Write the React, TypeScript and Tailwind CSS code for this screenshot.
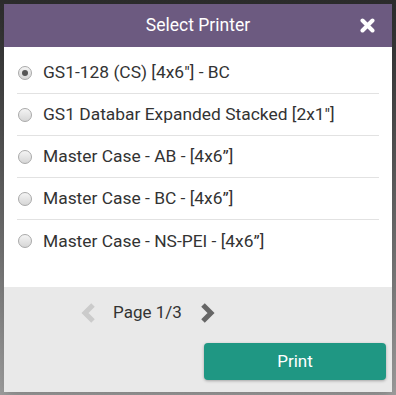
const printers = [
  "GS1-128 (CS) [4x6\"] - BC",
  "GS1 Databar Expanded Stacked [2x1\"]",
  "Master Case - AB - [4x6\u201D]",
  "Master Case - BC - [4x6\u201D]",
  "Master Case - NS-PEI - [4x6\u201D]",
];

function Radio({ checked }: { checked: boolean }) {
  return (
    <span className="flex h-[14px] w-[14px] shrink-0 items-center justify-center rounded-full border border-[#a9a9a9] bg-gradient-to-b from-[#f4f4f4] to-[#d6d6d6]">
      {checked && <span className="h-[6px] w-[6px] rounded-full bg-[#555]" />}
    </span>
  );
}

function Chevron({ dir, color }: { dir: "left" | "right"; color: string }) {
  const points = dir === "left" ? "12,2 4,10 12,18" : "4,2 12,10 4,18";
  return (
    <svg width="16" height="20" viewBox="0 0 16 20">
      <polyline
        points={points}
        fill="none"
        stroke={color}
        strokeWidth="5"
        strokeLinejoin="miter"
      />
    </svg>
  );
}

export default function App() {
  return (
    <div className="h-[395px] w-[396px] bg-gradient-to-b from-[#2b2b2b] to-[#9c9c9c] pl-[4px] pt-[4px] font-['Roboto',sans-serif]">
      <div className="flex h-[388px] w-[388px] flex-col bg-white shadow-lg">
        <div className="relative flex h-[43px] shrink-0 items-center justify-center bg-[#6c5a80]">
          <span className="text-[17.5px] text-white">Select Printer</span>
          <svg
            className="absolute left-[356px] top-[14px]"
            width="15"
            height="15"
            viewBox="0 0 15 15"
          >
            <path d="M2.5 2.5 L12.5 12.5 M12.5 2.5 L2.5 12.5" stroke="#fff" strokeWidth="4" strokeLinecap="round" />
          </svg>
        </div>
        <div className="flex-1 px-[13px] pt-[5px]">
          {printers.map((name, i) => (
            <label
              key={name}
              className={`flex h-[42px] items-center gap-[11px] pl-[1px] ${
                i < printers.length - 1 ? "border-b border-[#e2e2e2]" : ""
              }`}
            >
              <Radio checked={i === 0} />
              <span className="text-[17.4px] text-[#333]">{name}</span>
            </label>
          ))}
        </div>
        <div className="flex h-[105px] shrink-0 flex-col bg-[#e9e9e9]">
          <div className="flex h-[52px] items-center pl-[77px]">
            <Chevron dir="left" color="#cbcbcb" />
            <span className="ml-[16px] text-[17px] text-[#333]">Page 1/3</span>
            <span className="ml-[17px]">
              <Chevron dir="right" color="#666" />
            </span>
          </div>
          <div className="mt-[4px] flex justify-end pr-[6px]">
            <button className="h-[37px] w-[182px] rounded-[4px] bg-[#1f9783] text-[17px] text-white shadow-[0_1px_3px_rgba(0,0,0,0.3)]">
              Print
            </button>
          </div>
        </div>
      </div>
    </div>
  );
}
